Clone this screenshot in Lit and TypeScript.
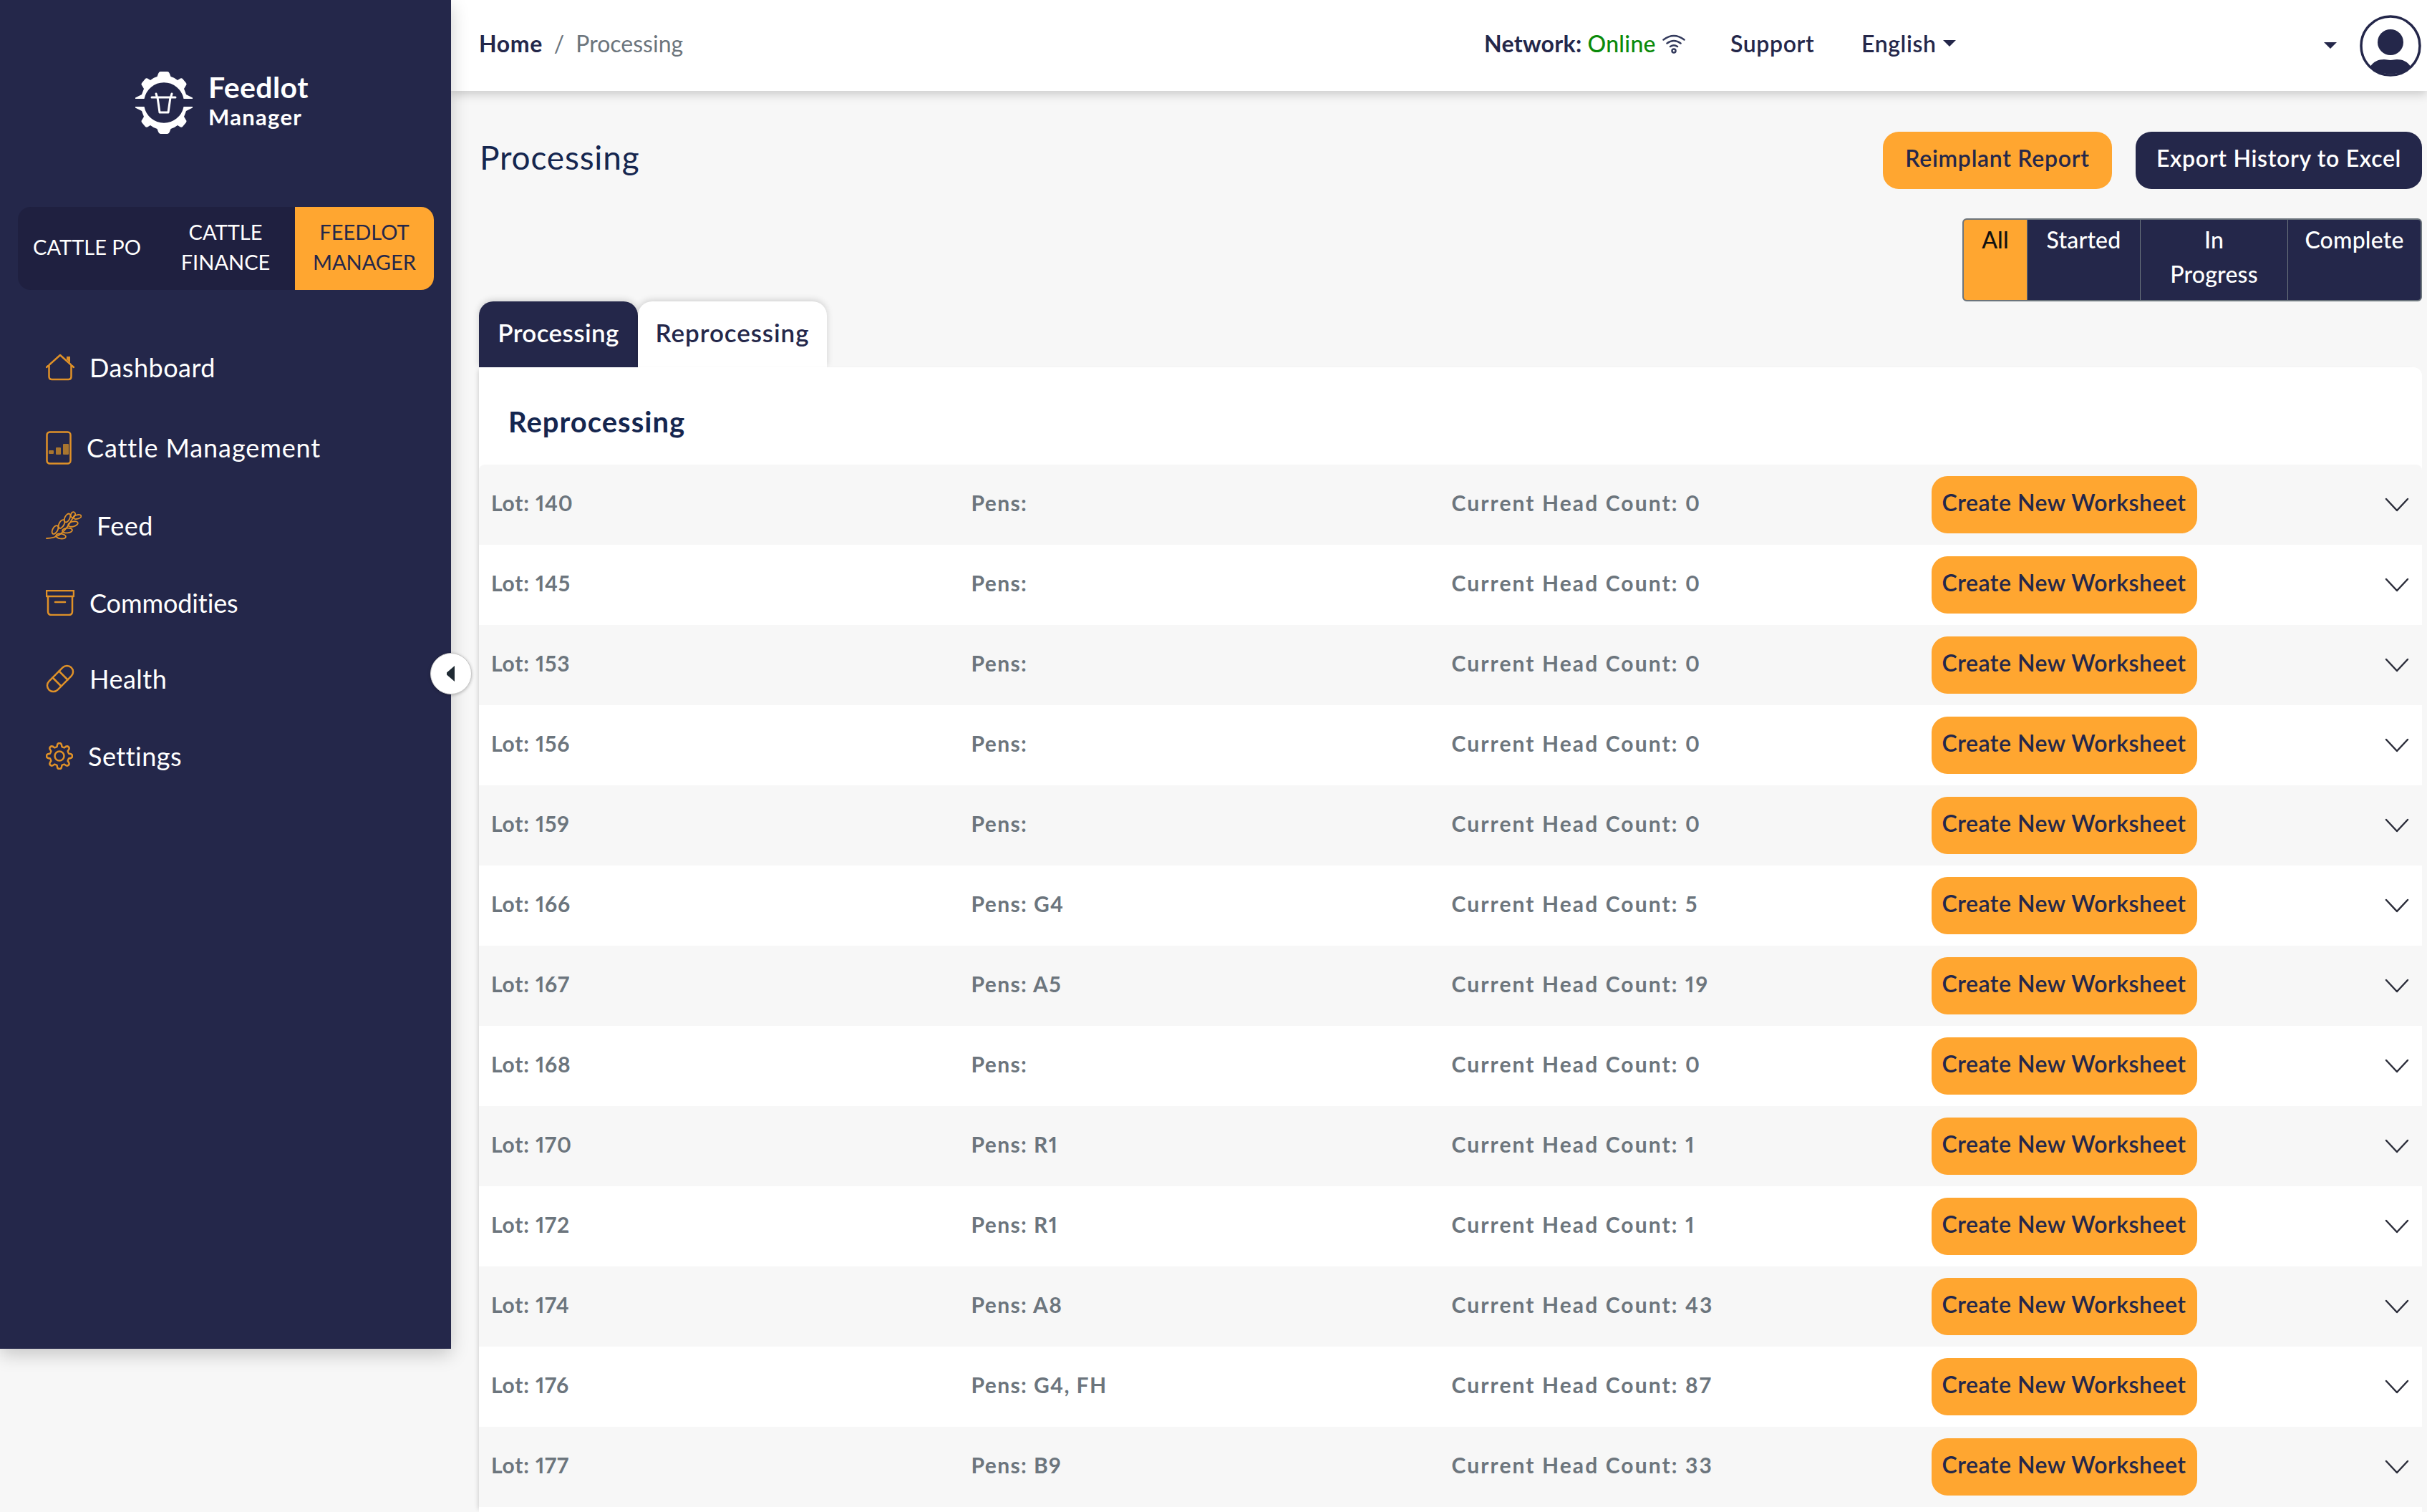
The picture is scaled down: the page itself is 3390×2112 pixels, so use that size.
import { LitElement, html, css, svg } from "lit";
import { customElement } from "lit/decorators.js";

const rows: [string, string, string][] = [
  ["140", "", "0"], ["145", "", "0"], ["153", "", "0"], ["156", "", "0"], ["159", "", "0"],
  ["166", "G4", "5"], ["167", "A5", "19"], ["168", "", "0"], ["170", "R1", "1"], ["172", "R1", "1"],
  ["174", "A8", "43"], ["176", "G4, FH", "87"], ["177", "B9", "33"],
];

function gearPath(cx: number, cy: number, ro: number, ri: number, teeth: number): string {
  const pts: string[] = [];
  const step = (Math.PI * 2) / teeth;
  for (let i = 0; i < teeth; i++) {
    const a = i * step - Math.PI / 2;
    const p = (r: number, o: number) =>
      `${(cx + r * Math.cos(a + o * step)).toFixed(2)} ${(cy + r * Math.sin(a + o * step)).toFixed(2)}`;
    pts.push(`${i === 0 ? "M" : "L"}${p(ri, -0.32)}`);
    pts.push(`Q${p(ro * 1.02, -0.22)} ${p(ro, 0)}`);
    pts.push(`Q${p(ro * 1.02, 0.22)} ${p(ri, 0.32)}`);
    pts.push(`Q${p(ri * 0.96, 0.5)} ${p(ri, 0.68)}`);
  }
  return pts.join(" ") + " Z";
}

const icons = {
  home: svg`<svg class="ic" width="40" height="38" viewBox="0 0 40 38"><path d="M1 19 20 2l19 17M4.500 16v16q0 4 4 4h23q4 0 4-4V16"/><path class="solid" d="M29 4h5v9l-5-5z"/></svg>`,
  tablet: svg`<svg class="ic" width="36" height="47" viewBox="0 0 36 47"><rect x="1.500" y="1.500" width="33" height="44" rx="4"/><g class="dim"><rect x="4" y="27" width="7" height="5" rx="1"/><rect x="14" y="23" width="7" height="10" rx="1"/><rect x="24" y="18" width="8" height="15" rx="1"/></g></svg>`,
  wheat: svg`<svg class="ic thin" width="50" height="40" viewBox="0 0 50 40"><path d="M1 38q10 0 18-5 8-6 13-14l8-13"/><g><ellipse cx="13" cy="26" rx="6.500" ry="3.400" transform="rotate(-60 13 26)"/><ellipse cx="21" cy="35" rx="7" ry="3.400" transform="rotate(8 21 35)"/><ellipse cx="22" cy="18" rx="6.500" ry="3.400" transform="rotate(-60 22 18)"/><ellipse cx="30" cy="27" rx="7" ry="3.400" transform="rotate(-5 30 27)"/><ellipse cx="30" cy="9.500" rx="6.500" ry="3.400" transform="rotate(-62 30 9.500)"/><ellipse cx="38" cy="18" rx="7" ry="3.400" transform="rotate(-15 38 18)"/><ellipse cx="38" cy="5" rx="4" ry="3" transform="rotate(-70 38 5)"/><ellipse cx="44" cy="8" rx="5.500" ry="2.800" transform="rotate(-15 44 8)"/></g></svg>`,
  box: svg`<svg class="ic" width="40" height="36" viewBox="0 0 40 36"><rect x="1" y="1" width="38" height="8"/><path d="M3 9v21q0 5 5 5h24q5 0 5-5V9M13 17h14"/></svg>`,
  bandage: svg`<svg class="ic" width="40" height="40" viewBox="0 0 40 40"><rect x="-2" y="11.500" width="44" height="17" rx="8.500" transform="rotate(-45 20 20)"/><path d="M9.500 18.500l12 12M18.500 9.500l12 12"/></svg>`,
  gear: svg`<svg class="ic" width="38" height="38" viewBox="0 0 38 38"><path d="${gearPath(19, 19, 18, 13.5, 8)}"/><circle cx="19" cy="19" r="6.500"/></svg>`,
};

const nav = [
  { label: "Dashboard", icon: icons.home, h: 108 },
  { label: "Cattle Management", icon: icons.tablet, h: 116 },
  { label: "Feed", icon: icons.wheat, h: 102 },
  { label: "Commodities", icon: icons.box, h: 114 },
  { label: "Health", icon: icons.bandage, h: 98 },
  { label: "Settings", icon: icons.gear, h: 118 },
];

const gearHalf = "M0-44h5q2 0 3 3l1.500 4q4.500 1 9.500 5l4-2.500q2-.5 3 .5l5 6q1 2 0 3l-3 5q2 5 3 8l9 4.500V-6H27.500A28 28 0 0 0-27.500-6H-40v-1.500L-31-12q1-3 3-8l-3-5q-1-1 0-3l5-6q1-1 3-.5l4 2.500q5-4 9.500-5L-8-41q1-3 3-3z";

@customElement("app-root")
export class AppRoot extends LitElement {
  static styles = css`
    :host { display: block; width: 3390px; height: 2112px; overflow: hidden; background: #f7f7f7; font-family: "Lato", sans-serif; position: relative; }
    .page { display: flex; height: 100%; }
    .side { width: 630px; height: 1884px; flex: none; background: #24274a; box-shadow: 0 8px 24px rgba(0,0,0,.2); position: relative; z-index: 3; box-sizing: border-box; padding-top: 100px; }
    .logo { display: flex; height: 88px; margin-left: 189px; gap: 22px; color: #fff; }
    .logo-text { display: flex; flex-direction: column; }
    .logo-a { font-size: 41px; line-height: 44px; font-weight: 700; letter-spacing: .4px; }
    .logo-b { font-size: 31px; line-height: 36px; margin-top: 1px; font-weight: 700; letter-spacing: 1.300px; }
    .switch { margin: 101px 24px 0 25px; height: 116px; background: #1f2040; border-radius: 18px; display: grid; grid-template-columns: 193px 194px 194px; overflow: hidden; font-size: 29px; line-height: 42px; text-align: center; color: #fff; }
    .switch div { display: flex; align-items: center; justify-content: center; padding-bottom: 4px; box-sizing: border-box; }
    .switch .on { background: #ffa630; color: #24274a; }
    .nav { margin-top: 54px; }
    .item { display: flex; align-items: center; gap: 21px; padding-left: 64px; color: #fff; font-size: 36px; letter-spacing: .5px; }
    .item:nth-child(2) { letter-spacing: .9px; }
    .item:nth-child(4) { letter-spacing: -.1px; }
    .ic { fill: none; stroke: #df9128; stroke-width: 2.500; stroke-linejoin: round; stroke-linecap: round; flex: none; }
    .ic.thin { stroke-width: 1.800; }
    .ic .solid { fill: #df9128; stroke: none; }
    .ic .dim { fill: #a8752f; stroke: none; }
    .collapse { position: absolute; left: 601px; top: 912px; width: 58px; height: 58px; padding: 0; border-radius: 50%; background: #fff; border: 1px solid #c9c9c9; box-shadow: 0 1px 4px rgba(0,0,0,.25); display: flex; align-items: center; justify-content: center; z-index: 5; box-sizing: border-box; }
    .main { flex: 1; display: flex; flex-direction: column; min-width: 0; }
    .top { height: 127px; flex: none; background: #fff; box-shadow: 0 4px 14px rgba(0,0,0,.2); display: flex; align-items: center; position: relative; z-index: 2; color: #24274a; font-size: 32px; font-weight: 700; letter-spacing: .6px; }
    .crumb { width: 1443px; flex: none; box-sizing: border-box; padding-left: 39px; padding-bottom: 6px; display: flex; gap: 16px; align-items: center; }
    .crumb .sep, .crumb .cur { color: #6c757d; font-weight: 400; letter-spacing: 0; }
    .netw { width: 344px; flex: none; display: flex; align-items: center; padding-bottom: 6px; letter-spacing: .3px; }
    .netw .on { color: #0a8a0a; margin-left: 8px; font-weight: 500; }
    .netw svg { margin-left: 9px; }
    .sup { width: 183px; flex: none; padding-bottom: 6px; font-weight: 600; }
    .lang { display: flex; align-items: center; gap: 9px; flex: none; padding-bottom: 6px; font-weight: 600; }
    .caret { width: 0; height: 0; border-left: 9px solid transparent; border-right: 9px solid transparent; border-top: 9px solid #24274a; flex: none; }
    .acct { margin-left: auto; display: flex; align-items: center; gap: 32px; padding-right: 8px; }
    .content { flex: 1; display: flex; flex-direction: column; padding: 57px 7px 0 39px; min-height: 0; }
    .head { display: flex; justify-content: space-between; align-items: center; height: 80px; }
    h1 { margin: 0 0 10px; font-size: 46px; font-weight: 400; color: #15264f; letter-spacing: .8px; padding-left: 1px; }
    .btns { display: flex; gap: 33px; }
    .btn { height: 80px; border-radius: 22px; display: flex; align-items: center; justify-content: center; font-size: 32px; font-weight: 600; box-sizing: border-box; letter-spacing: .7px; padding-bottom: 7px; }
    .btn.or { background: #ffa630; color: #24274a; }
    .btn.nv { background: #24274a; color: #fff; }
    .b1 { width: 320px; } .b2 { width: 400px; }
    .seg-w { display: flex; justify-content: flex-end; margin-top: 41px; }
    .seg { display: grid; grid-template-columns: 88px 158px 206px 186px; border: 2px solid #6c757d; border-radius: 6px; overflow: hidden; background: #24274a; color: #fff; font-size: 32px; line-height: 48px; font-weight: 500; text-align: center; height: 116px; box-sizing: border-box; letter-spacing: .2px; }
    .seg div { padding-top: 4px; border-left: 1px solid #6c757d; }
    .seg div:first-child { background: #ffa630; color: #111; border-left: 0; }
    .tabs { display: flex; height: 92px; flex: none; position: relative; }
    .tab { border-radius: 20px 20px 0 0; display: flex; align-items: center; justify-content: center; font-size: 35px; font-weight: 600; box-shadow: 0 -2px 10px rgba(0,0,0,.16); padding-bottom: 6px; box-sizing: border-box; }
    .tab.a { width: 222px; background: #24274a; color: #fff; letter-spacing: .4px; }
    .tab.b { width: 264px; background: #fff; color: #24274a; letter-spacing: .9px; }
    .card { flex: 1; background: #fff; box-shadow: -5px 0 6px -4px rgba(0,0,0,.16); border-radius: 0 12px 0 0; position: relative; }
    h2 { margin: 0; height: 136px; box-sizing: border-box; padding: 51px 0 0 41px; font-size: 40px; line-height: 50px; font-weight: 700; color: #15264f; letter-spacing: 1px; }
    .row { height: 112px; display: grid; grid-template-columns: 670.500px 671px 670px 1fr; align-items: center; padding-left: 17px; box-sizing: border-box; color: #6c757d; font-size: 30px; font-weight: 700; font-variant-numeric: proportional-nums; }
    .row:nth-child(even) { background: #f7f7f7; }
    .row.first { border-radius: 8px 8px 0 0; }
    .row span { position: relative; top: -3px; }
    .lot { letter-spacing: .8px; } .pens { letter-spacing: 1.400px; } .cnt { letter-spacing: 2.100px; }
    .end { display: flex; align-items: center; justify-content: space-between; padding-right: 18px; }
    .cnw { width: 371px; height: 80px; background: #ffa630; color: #24274a; border-radius: 22px; display: flex; align-items: center; justify-content: center; font-size: 32px; font-weight: 600; letter-spacing: .5px; padding-bottom: 7px; box-sizing: border-box; }
    .chev { fill: none; stroke: #2b2d3a; stroke-width: 2.500; stroke-linecap: round; stroke-linejoin: round; }
  `;

  render() {
    return html`<div class="page">
      <aside class="side">
        <div class="logo">
          <svg width="80" height="88" viewBox="-40 -44 80 88">
            <path fill="#fff" d="${gearHalf}"/>
            <path fill="#fff" d="${gearHalf}" transform="translate(0 -1) scale(1 -1)"/>
            <path fill="none" stroke="#fff" stroke-width="3" stroke-linejoin="round" stroke-linecap="round" d="M-17-8H16M-11-13l1.500 5M11-13 9.500-8M-9-8l3 21H6L9-8"/>
          </svg>
          <div class="logo-text"><span class="logo-a">Feedlot</span><span class="logo-b">Manager</span></div>
        </div>
        <div class="switch">
          <div>CATTLE PO</div><div>CATTLE<br />FINANCE</div><div class="on">FEEDLOT<br />MANAGER</div>
        </div>
        <nav class="nav">
          ${nav.map((n) => html`<div class="item" style="height:${n.h}px">${n.icon}<span>${n.label}</span></div>`)}
        </nav>
      </aside>
      <button class="collapse" aria-label="Collapse">
        <svg width="14" height="22" viewBox="0 0 14 22"><path fill="#1f2a33" d="M12 0v22L1 12.500v-3z"/></svg>
      </button>
      <div class="main">
        <header class="top">
          <div class="crumb"><span>Home</span><span class="sep">/</span><span class="cur">Processing</span></div>
          <div class="netw">Network:<span class="on">Online</span>
            <svg width="32" height="28" viewBox="0 0 32 28" fill="none" stroke="#333a5c" stroke-width="2.500" stroke-linecap="round"><path d="M1.500 8.500q14.500-11 29 0M6.500 13.500q9.500-7 19 0M11 18q5-3.500 10 0"/><circle cx="16" cy="24" r="2.500"/></svg>
          </div>
          <div class="sup">Support</div>
          <div class="lang">English<span class="caret"></span></div>
          <div class="acct"><span class="caret"></span>
            <svg width="86" height="86" viewBox="0 0 86 86">
              <circle cx="43" cy="43" r="41" fill="#fff" stroke="#24274a" stroke-width="3.500"/>
              <circle cx="43" cy="38" r="18" fill="#24274a"/>
              <path fill="#24274a" d="M15 72c4-7 11-10 19-10 4 0 5 1 9 1s5-1 9-1c8 0 15 3 19 10-14 14-42 14-56 0z"/>
            </svg>
          </div>
        </header>
        <section class="content">
          <div class="head">
            <h1>Processing</h1>
            <div class="btns"><div class="btn or b1">Reimplant Report</div><div class="btn nv b2">Export History to Excel</div></div>
          </div>
          <div class="seg-w"><div class="seg"><div>All</div><div>Started</div><div>In<br />Progress</div><div>Complete</div></div></div>
          <div class="tabs"><div class="tab a">Processing</div><div class="tab b">Reprocessing</div></div>
          <div class="card">
            <h2>Reprocessing</h2>
            ${rows.map((r, i) => html`<div class="row ${i === 0 ? "first" : ""}">
              <span class="lot">Lot: ${r[0]}</span><span class="pens">Pens:${r[1] ? " " + r[1] : ""}</span><span class="cnt">Current Head Count: ${r[2]}</span>
              <div class="end"><div class="cnw">Create New Worksheet</div>
                <svg class="chev" width="34" height="20" viewBox="0 0 34 20"><path d="M2 2 17 18 32 2"/></svg>
              </div>
            </div>`)}
          </div>
        </section>
      </div>
    </div>`;
  }
}
